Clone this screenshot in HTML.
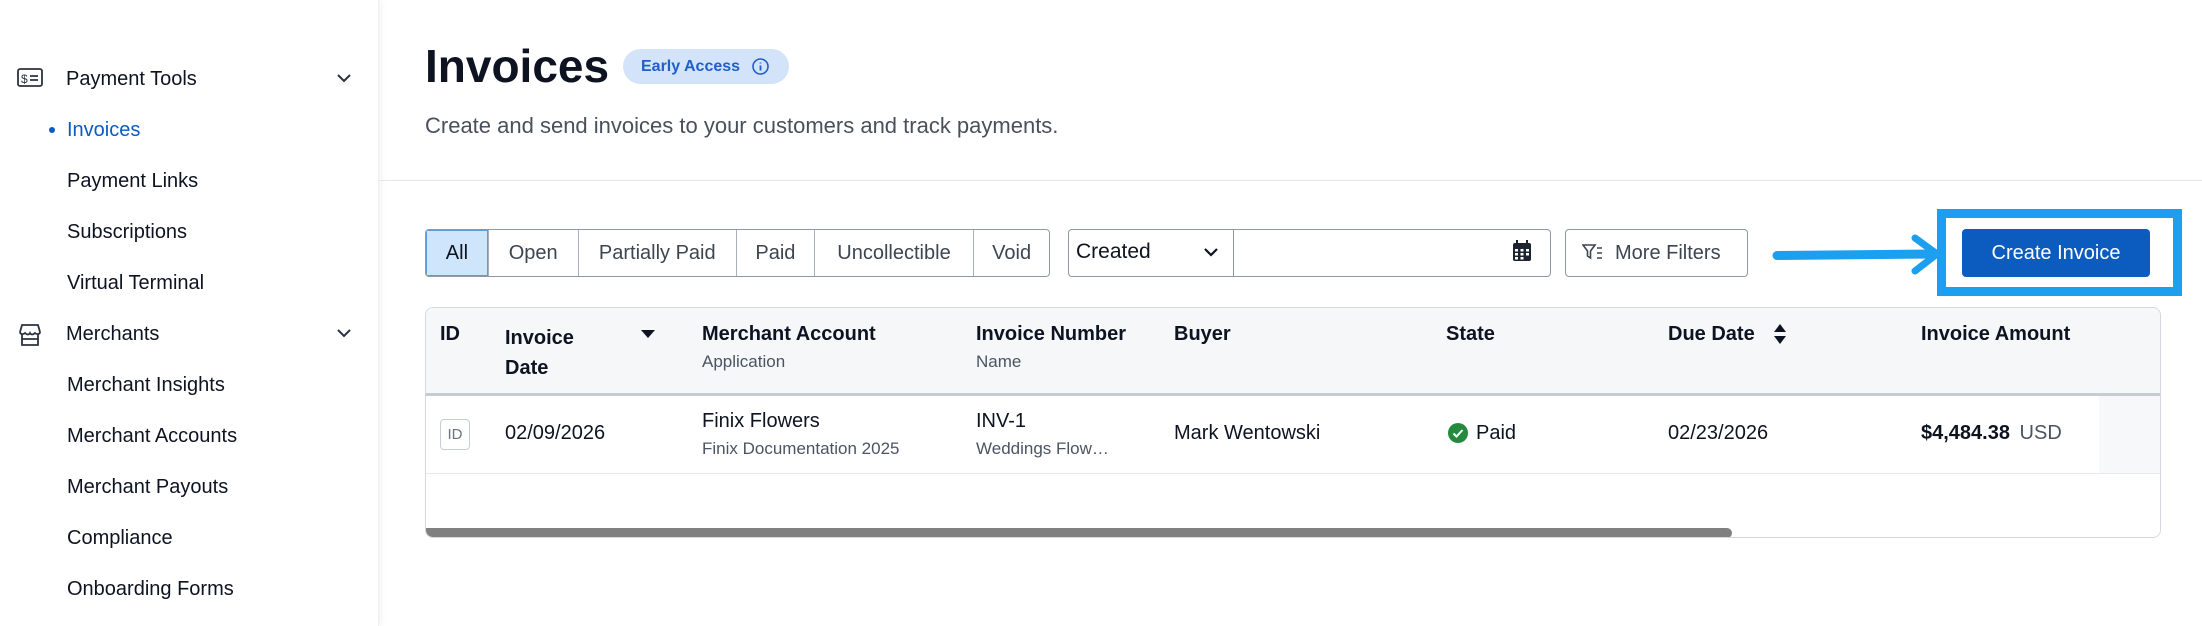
<!DOCTYPE html>
<html><head><meta charset="utf-8"><style>
*{box-sizing:border-box;margin:0;padding:0}
body{width:2202px;height:626px;background:#fff;font-family:"Liberation Sans",sans-serif;color:#0d1321;position:relative;overflow:hidden}
.abs{position:absolute}
.side{left:0;top:0;width:379px;height:626px;background:#fff;box-shadow:2px 0 6px rgba(0,0,0,0.06);border-right:1px solid #eef0f3}
.nav{position:absolute;font-size:20px;color:#0d1321;line-height:24px}
.t{font-size:21px;line-height:24px}
.seg{position:absolute;top:229px;height:48px;border:1px solid #8e99a8;display:flex;border-radius:4px;overflow:hidden;left:425px}
.seg div{height:46px;line-height:46px;font-size:20px;color:#3d4551;text-align:center;border-left:1px solid #a7b0bd}
.seg div:first-child{border-left:none;background:#cfe5fb;color:#0d1321;box-shadow:inset 0 0 0 1px #5f9bd8}
.hd{font-weight:bold;font-size:20px;color:#0d1321;position:absolute}
.sub{font-size:17px;color:#4b5462;position:absolute}
.cell{font-size:20px;color:#0d1321;position:absolute}
</style></head><body>
<div class="abs side"></div>
<!-- sidebar -->
<svg class="abs" style="left:17px;top:68px" width="26" height="20" viewBox="0 0 26 20"><rect x="1" y="1" width="24" height="17" rx="2" fill="none" stroke="#2b3340" stroke-width="1.8"/><text x="4" y="15" font-size="12" font-family="Liberation Sans" fill="#2b3340">$</text><path d="M13 8h8M13 12h8" stroke="#2b3340" stroke-width="1.8"/></svg>
<div class="nav" style="left:66px;top:67px">Payment Tools</div>
<svg class="abs" style="left:336px;top:72px" width="16" height="12"><path d="M2 3l6 6 6-6" fill="none" stroke="#2b3340" stroke-width="2"/></svg>
<div class="abs" style="left:49px;top:127px;width:6px;height:6px;border-radius:3px;background:#0b5cc0"></div>
<div class="nav" style="left:67px;top:118px;color:#0b5cc0">Invoices</div>
<div class="nav" style="left:67px;top:169px">Payment Links</div>
<div class="nav" style="left:67px;top:220px">Subscriptions</div>
<div class="nav" style="left:67px;top:271px">Virtual Terminal</div>
<svg class="abs" style="left:17px;top:323px" width="26" height="24" viewBox="0 0 26 24"><path d="M3 9l2-7h16l2 7M3 9c0 2 3 3 5 1 2 2 4 2 5 0 1 2 3 2 5 0 2 2 5 1 5-1M5 11v11h16V11M5 16h16" fill="none" stroke="#2b3340" stroke-width="1.8"/></svg>
<div class="nav" style="left:66px;top:322px">Merchants</div>
<svg class="abs" style="left:336px;top:327px" width="16" height="12"><path d="M2 3l6 6 6-6" fill="none" stroke="#2b3340" stroke-width="2"/></svg>
<div class="nav" style="left:67px;top:373px">Merchant Insights</div>
<div class="nav" style="left:67px;top:424px">Merchant Accounts</div>
<div class="nav" style="left:67px;top:475px">Merchant Payouts</div>
<div class="nav" style="left:67px;top:526px">Compliance</div>
<div class="nav" style="left:67px;top:577px">Onboarding Forms</div>

<!-- header -->
<div class="abs" style="left:425px;top:40px;font-size:46px;font-weight:bold;line-height:52px;color:#0d1321">Invoices</div>
<div class="abs" style="left:623px;top:49px;width:166px;height:35px;border-radius:18px;background:#d3e3fa;color:#1f5fc7;font-weight:bold;font-size:16px;line-height:35px;padding-left:18px">Early Access
<svg style="position:absolute;left:128px;top:8px" width="19" height="19"><circle cx="9.5" cy="9.5" r="7.5" fill="none" stroke="#1f5fc7" stroke-width="1.6"/><path d="M9.5 8.5v5M9.5 5.5v1" stroke="#1f5fc7" stroke-width="1.8"/></svg></div>
<div class="abs" style="left:425px;top:113px;font-size:22px;color:#4a505b">Create and send invoices to your customers and track payments.</div>
<div class="abs" style="left:379px;top:180px;width:1823px;height:1px;background:#e3e6ea"></div>

<!-- filters -->
<div class="seg" style="width:625px">
<div style="width:62px">All</div><div style="width:90px">Open</div><div style="width:159px">Partially Paid</div><div style="width:78px">Paid</div><div style="width:160px">Uncollectible</div><div style="width:76px">Void</div>
</div>
<div class="abs" style="left:1068px;top:229px;width:483px;height:48px;border:1px solid #8e99a8;border-radius:4px"></div>
<div class="abs" style="left:1233px;top:229px;width:1px;height:48px;background:#8e99a8"></div>
<div class="abs t" style="left:1076px;top:240px;color:#0d1321">Created</div>
<svg class="abs" style="left:1203px;top:246px" width="16" height="12"><path d="M2 3l6 6 6-6" fill="none" stroke="#0d1321" stroke-width="2.2"/></svg>
<svg class="abs" style="left:1512px;top:239px" width="20" height="24" viewBox="0 0 20 24"><rect x="1" y="4" width="18" height="18" rx="2" fill="#1c2330"/><path d="M5 1v5M15 1v5" stroke="#1c2330" stroke-width="2"/><g fill="#fff"><rect x="3" y="10" width="3" height="2.5"/><rect x="8.5" y="10" width="3" height="2.5"/><rect x="14" y="10" width="3" height="2.5"/><rect x="3" y="14" width="3" height="2.5"/><rect x="8.5" y="14" width="3" height="2.5"/><rect x="14" y="14" width="3" height="2.5"/><rect x="3" y="18" width="3" height="2.5"/><rect x="8.5" y="18" width="3" height="2.5"/></g></svg>
<div class="abs" style="left:1565px;top:229px;width:183px;height:48px;border:1px solid #8e99a8;border-radius:4px"></div>
<svg class="abs" style="left:1582px;top:243px" width="22" height="20" viewBox="0 0 22 20"><path d="M1 2h12l-4.5 6v7l-3-2V8z" fill="none" stroke="#3d4551" stroke-width="1.6"/><path d="M15 5h5M15 10h5M15 15h5" stroke="#3d4551" stroke-width="1.6"/></svg>
<div class="abs t" style="left:1615px;top:241px;color:#3d4551;font-size:20px">More Filters</div>

<!-- arrow + highlight -->
<svg class="abs" style="left:1770px;top:230px" width="175" height="50" viewBox="0 0 175 50"><path d="M7 25.5L165 24" stroke="#1d9ff0" stroke-width="9" stroke-linecap="round" fill="none"/><path d="M145 8l22 16-22 17" stroke="#1d9ff0" stroke-width="7" stroke-linecap="round" stroke-linejoin="round" fill="none"/></svg>
<div class="abs" style="left:1937px;top:209px;width:245px;height:87px;border:9px solid #1d9ff0"></div>
<div class="abs" style="left:1962px;top:229px;width:188px;height:48px;background:#0b5cbe;border-radius:4px;color:#fff;font-size:20px;line-height:48px;text-align:center">Create Invoice</div>

<!-- table -->
<div class="abs" style="left:425px;top:307px;width:1736px;height:231px;border:1px solid #d5d9df;border-radius:8px;overflow:hidden">
 <div class="abs" style="left:0;top:0;width:1736px;height:85px;background:#f5f7f9"></div>
 <div class="abs" style="left:0;top:85px;width:1736px;height:3px;background:#c7ccd3"></div>
 <div class="abs" style="left:1673px;top:88px;width:63px;height:77px;background:#f7f8f9"></div>
 <div class="abs" style="left:0;top:165px;width:1736px;height:1px;background:#e6e9ed"></div>
 <div class="abs" style="left:0;top:220px;width:1306px;height:10px;background:#808080;border-radius:0 5px 5px 0"></div>
</div>
<div class="hd" style="left:440px;top:323px">ID</div>
<div class="hd" style="left:505px;top:323px;line-height:30px">Invoice<br>Date</div>
<svg class="abs" style="left:640px;top:329px" width="16" height="10"><path d="M1 1h14L8 9z" fill="#0d1321"/></svg>
<div class="hd" style="left:702px;top:323px">Merchant Account</div>
<div class="sub" style="left:702px;top:352px">Application</div>
<div class="hd" style="left:976px;top:323px">Invoice Number</div>
<div class="sub" style="left:976px;top:352px">Name</div>
<div class="hd" style="left:1174px;top:323px">Buyer</div>
<div class="hd" style="left:1446px;top:323px">State</div>
<div class="hd" style="left:1668px;top:323px">Due Date</div>
<svg class="abs" style="left:1773px;top:323px" width="14" height="22"><path d="M7 1l6 8H1zM7 21l6-8H1z" fill="#0d1321"/></svg>
<div class="hd" style="left:1921px;top:323px">Invoice Amount</div>

<div class="abs" style="left:440px;top:419px;width:30px;height:31px;border:1px solid #c8cdd4;border-radius:4px;font-size:15px;color:#6b7380;text-align:center;line-height:29px">ID</div>
<div class="cell" style="left:505px;top:422px">02/09/2026</div>
<div class="cell" style="left:702px;top:410px">Finix Flowers</div>
<div class="sub" style="left:702px;top:439px">Finix Documentation 2025</div>
<div class="cell" style="left:976px;top:410px">INV-1</div>
<div class="sub" style="left:976px;top:439px">Weddings Flow…</div>
<div class="cell" style="left:1174px;top:422px">Mark Wentowski</div>
<svg class="abs" style="left:1448px;top:423px" width="20" height="20"><circle cx="10" cy="10" r="10" fill="#248a3d"/><path d="M5.5 10.5l3 3 6-6.5" stroke="#fff" stroke-width="2" fill="none"/></svg>
<div class="cell" style="left:1476px;top:422px">Paid</div>
<div class="cell" style="left:1668px;top:422px">02/23/2026</div>
<div class="cell" style="left:1921px;top:422px;font-weight:bold">$4,484.38 <span style="font-weight:normal;color:#4b5462;margin-left:4px">USD</span></div>
</body></html>
